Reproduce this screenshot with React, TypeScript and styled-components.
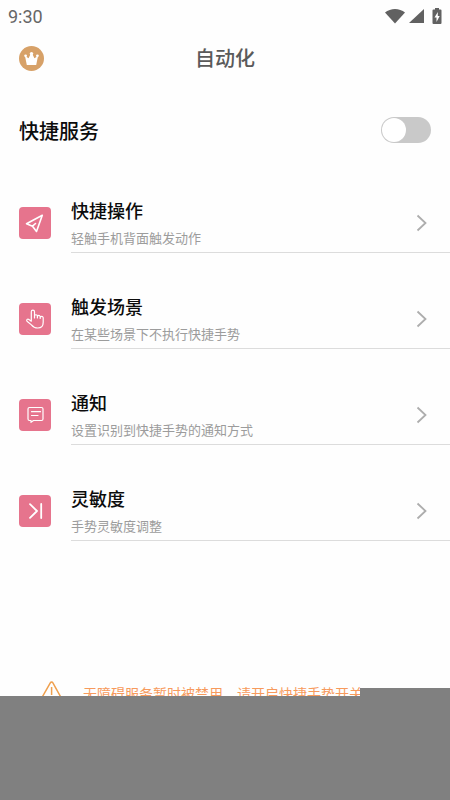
import React, { useState } from 'react';
import styled, { createGlobalStyle } from 'styled-components';

const GlobalStyle = createGlobalStyle`
  * { box-sizing: border-box; }
  body {
    margin: 0;
    background: #fefefe;
    font-family: Roboto, "Noto Sans CJK SC", sans-serif;
    color: #0c0c0c;
  }
  button { font: inherit; color: inherit; border: 0; background: none; padding: 0; cursor: pointer; }
`;

const Page = styled.div`
  display: flex;
  flex-direction: column;
  min-height: 100vh;
`;

const StatusBar = styled.div`
  display: flex;
  align-items: center;
  justify-content: space-between;
  height: 32px;
  padding: 0 8px;
  color: #666;
  font-size: 18px;
`;

const StatusIcons = styled.div`
  display: flex;
  align-items: center;
  gap: 4px;
  svg { display: block; fill: #616161; }
  svg:last-child { margin-left: 4px; }
`;

const Header = styled.header`
  display: grid;
  grid-template-columns: 1fr auto 1fr;
  align-items: center;
  height: 52px;
  padding: 0 19px;
`;

const PageTitle = styled.h1`
  margin: 0;
  padding-top: 2px;
  font-size: 20px;
  line-height: 28px;
  font-weight: 500;
  color: #5a5a5a;
`;

const CrownButton = styled.button`
  justify-self: start;
  width: 25px;
  height: 25px;
  svg { display: block; }
`;

const ServiceRow = styled.label`
  display: flex;
  align-items: center;
  justify-content: space-between;
  height: 73px;
  padding: 19px 19px 0;
  font-size: 20px;
  font-weight: 500;
`;

const Switch = styled.input`
  appearance: none;
  display: flex;
  width: 50px;
  height: 26px;
  margin: 0;
  padding: 1px;
  border-radius: 13px;
  background: #c9c9c9;
  cursor: pointer;
  &::before {
    content: "";
    width: 24px;
    height: 24px;
    border-radius: 50%;
    background: #fff;
  }
  &:checked { justify-content: flex-end; background: #e6748f; }
`;

const List = styled.ul`
  margin: 0;
  padding: 0;
  list-style: none;
`;

const RowButton = styled.button`
  display: flex;
  align-items: center;
  gap: 20px;
  width: 100%;
  padding: 36px 0 0 19px;
  text-align: left;
`;

const IconTile = styled.span`
  flex: none;
  display: flex;
  align-items: center;
  justify-content: center;
  width: 32px;
  height: 32px;
  border-radius: 4px;
  background: #e6748d;
  svg { fill: none; stroke: #fff; stroke-linecap: round; stroke-linejoin: round; }
`;

const RowBody = styled.span`
  flex: 1;
  display: flex;
  align-items: center;
  justify-content: space-between;
  height: 60px;
  padding-right: 22px;
  border-bottom: 1px solid #dcdcdc;
`;

const RowText = styled.span`
  display: flex;
  flex-direction: column;
  gap: 4px;
  padding-top: 3px;
`;

const RowTitle = styled.span`
  font-size: 18px;
  line-height: 26px;
  font-weight: 500;
`;

const RowHint = styled.span`
  font-size: 13px;
  line-height: 20px;
  color: #9c9c9c;
`;

const Notice = styled.div`
  display: flex;
  gap: 21px;
  height: 19px;
  margin-top: 136px;
  padding-left: 41px;
  overflow: hidden;
  color: #f79a5c;
  font-size: 14px;
  line-height: 20px;
  white-space: nowrap;
  svg { flex: none; margin-top: 4px; }
  span { margin-top: 7px; }
`;

const BottomPanel = styled.footer`
  position: relative;
  flex: 1;
  background: #808080;
  &::before {
    content: "";
    position: absolute;
    right: 0;
    bottom: 100%;
    width: 20%;
    height: 8px;
    background: #808080;
  }
`;

const CrownIcon = () => (
  <svg width="25" height="25" viewBox="0 0 25 25" aria-hidden="true">
    <circle cx="12.5" cy="12.5" r="12.5" fill="#d7a168" />
    <g fill="#fff">
      <path d="M6 10 9.600 12.200 11.600 8h1.800l2 4.200L19 10l-1.800 8.900H7.800Z" />
      <circle cx="12.5" cy="7.600" r="1.700" />
      <circle cx="6.600" cy="9.800" r="1.400" />
      <circle cx="18.400" cy="9.800" r="1.400" />
    </g>
  </svg>
);

const PlaneIcon = () => (
  <svg width="20" height="20" viewBox="0 0 20 20" strokeWidth="1.6">
    <path d="M17.300 2.300 1.500 10.700 7.500 13.200 11.500 18.500ZM7.500 13.200 10.500 10.500" />
  </svg>
);

const HandIcon = () => (
  <svg width="20" height="20" viewBox="0 0 20 20" strokeWidth="1.2">
    <path d="M6.3 12.2V2.8a1.6 1.6 0 0 1 3.2 0v5.6M9.5 9V7.2a1.4 1.4 0 0 1 2.9 0V9M12.4 9V7.8a1.4 1.4 0 0 1 2.8 0v1.7M15.2 9.500V8.800a1.500 1.500 0 0 1 3 .1v4.300c0 3.600-2 5.800-5.400 5.800-3.400 0-4.800-1-6.400-3.100L2 12.2c-1-1.4.6-2.8 2-1.7l2.300 1.700" />
  </svg>
);

const MessageIcon = () => (
  <svg width="18" height="18" viewBox="0 0 18 18" strokeWidth="1.2">
    <path d="M3.5 1.500h12A1.5 1.5 0 0 1 17 3v10a1.500 1.500 0 0 1-1.500 1.500H7.500l-2.500 1.800V14.500H3.500A1.500 1.500 0 0 1 2 13V3A1.500 1.500 0 0 1 3.500 1.500ZM5.500 5.700h9M5.500 9.500h6.500" />
  </svg>
);

const SkipIcon = () => (
  <svg width="18" height="18" viewBox="0 0 18 18" strokeWidth="1.800">
    <path d="M4 2.200 11 9l-7 6.800M15.200 2v14" />
  </svg>
);

const ChevronIcon = () => (
  <svg width="13" height="18" viewBox="0 0 13 18" fill="none" stroke="#adadad" strokeWidth="1.800" aria-hidden="true">
    <path d="M2.500 1.500 10.500 9l-8 7.500" />
  </svg>
);

const WarningIcon = () => (
  <svg width="21" height="20" viewBox="0 0 21 20" fill="none" stroke="#efa04e" strokeWidth="1.500" strokeLinejoin="round" aria-hidden="true">
    <path d="M9.300 1.800a1.500 1.500 0 0 1 2.600 0l8 14.500a1.300 1.300 0 0 1-1.200 2H2.300a1.300 1.300 0 0 1-1.200-2ZM10.600 6v8" />
  </svg>
);

const items = [
  { title: '快捷操作', hint: '轻触手机背面触发动作', Icon: PlaneIcon },
  { title: '触发场景', hint: '在某些场景下不执行快捷手势', Icon: HandIcon },
  { title: '通知', hint: '设置识别到快捷手势的通知方式', Icon: MessageIcon },
  { title: '灵敏度', hint: '手势灵敏度调整', Icon: SkipIcon },
];

export default function App() {
  const [enabled, setEnabled] = useState(false);
  return (
    <>
      <GlobalStyle />
      <Page>
        <StatusBar>
          <span>9:30</span>
          <StatusIcons aria-hidden="true">
            <svg width="20" height="16" viewBox="0 0 20 16"><path d="M0 4.500C5.500-.300 14.500-.300 20 4.500L10 15.500Z" /></svg>
            <svg width="15" height="14" viewBox="0 0 15 14"><path d="M15 0v14H0Z" /></svg>
            <svg width="10" height="18" viewBox="4 0 10 18">
              <path d="M7 1h4v1.500h1.500a1 1 0 0 1 1 1V16a1 1 0 0 1-1 1h-7a1 1 0 0 1-1-1V3.500a1 1 0 0 1 1-1H7Z" />
              <path d="M9.800 5 6.500 10.500h2V15l3.200-6h-1.900Z" fill="#fff" />
            </svg>
          </StatusIcons>
        </StatusBar>
        <Header>
          <CrownButton type="button" aria-label="会员"><CrownIcon /></CrownButton>
          <PageTitle>自动化</PageTitle>
        </Header>
        <main>
          <ServiceRow>
            快捷服务
            <Switch type="checkbox" checked={enabled} onChange={e => setEnabled(e.target.checked)} />
          </ServiceRow>
          <List>
            {items.map(({ title, hint, Icon }) => (
              <li key={title}>
                <RowButton type="button">
                  <IconTile aria-hidden="true"><Icon /></IconTile>
                  <RowBody>
                    <RowText>
                      <RowTitle>{title}</RowTitle>
                      <RowHint>{hint}</RowHint>
                    </RowText>
                    <ChevronIcon />
                  </RowBody>
                </RowButton>
              </li>
            ))}
          </List>
          <Notice role="status">
            <WarningIcon />
            <span>无障碍服务暂时被禁用，请开启快捷手势开关</span>
          </Notice>
        </main>
        <BottomPanel />
      </Page>
    </>
  );
}
